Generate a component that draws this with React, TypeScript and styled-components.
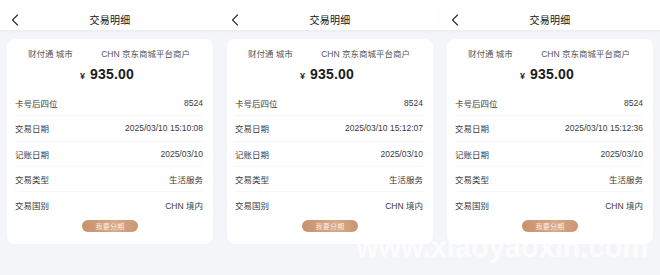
import styled, { createGlobalStyle } from "styled-components";

const GlobalStyle = createGlobalStyle`
  html, body {
    margin: 0;
    padding: 0;
    background: #f3f5f9;
    font-family: "Liberation Sans", "Noto Sans CJK SC", sans-serif;
  }
`;

interface Detail {
  time: string;
}

const details: Detail[] = [
  { time: "15:10:08" },
  { time: "15:12:07" },
  { time: "15:12:36" },
];

const Page = styled.div`
  position: relative;
  display: flex;
  width: 660px;
  height: 275px;
  overflow: hidden;
  background: #f3f5f9;
`;

const Panel = styled.div`
  width: 220px;
  display: flex;
  flex-direction: column;
`;

const Header = styled.div`
  height: 31px;
  box-sizing: border-box;
  padding-top: 9px;
  display: flex;
  align-items: center;
  justify-content: center;
  position: relative;
  background: #fff;
  border-bottom: 1px solid #eceef3;
  box-shadow: 0 1px 2px rgba(0, 0, 0, 0.03);
`;

const Back = styled.svg`
  position: absolute;
  left: 11px;
  top: 14px;
`;

const Title = styled.span`
  font-size: 10px;
  font-weight: 400;
  color: #111;
  letter-spacing: 0.3px;
`;

const Card = styled.div`
  margin: 8px 7px 0;
  background: #fff;
  border-radius: 8px;
  padding: 10px 10px 12px 8px;
  display: flex;
  flex-direction: column;
  height: 205px;
  box-sizing: border-box;
`;

const Merchant = styled.div`
  display: flex;
  justify-content: space-between;
  padding: 0 13px 0 13px;
  font-size: 8.5px;
  line-height: 10px;
  color: #555;
`;

const Amount = styled.div`
  margin-top: 5px;
  display: flex;
  align-items: baseline;
  justify-content: center;
  gap: 5px;
  line-height: 21px;
  color: #1c1c1c;
  font-weight: 700;
  padding-right: 4px;
`;

const Yen = styled.span`
  font-size: 9px;
`;

const Figure = styled.span`
  font-size: 14px;
  letter-spacing: 0.2px;
`;

const Rows = styled.div`
  margin-top: 4px;
  display: flex;
  flex-direction: column;
`;

const Row = styled.div<{ $last?: boolean }>`
  height: 25.3px;
  display: flex;
  align-items: center;
  justify-content: space-between;
  font-size: 8.5px;
  color: #3a3a3a;
  border-bottom: ${({ $last }) => ($last ? "none" : "1px solid #f7f7f9")};
  box-sizing: border-box;
`;

const Button = styled.div`
  align-self: center;
  margin-top: 3px;
  margin-left: 2px;
  width: 56px;
  height: 14px;
  border-radius: 7px;
  background: linear-gradient(90deg, #c8916c, #d8aa88 60%, #c99574);
  color: #fbeee4;
  font-size: 7px;
  display: flex;
  align-items: center;
  justify-content: center;
  letter-spacing: 0.3px;
`;

const Watermark = styled.div`
  position: absolute;
  left: 356px;
  top: 234px;
  font-size: 29px;
  line-height: 26px;
  font-weight: 700;
  color: rgba(255, 255, 255, 0.8);
  white-space: nowrap;
  pointer-events: none;
`;

const rows = (time: string): [string, string][] => [
  ["卡号后四位", "8524"],
  ["交易日期", `2025/03/10 ${time}`],
  ["记账日期", "2025/03/10"],
  ["交易类型", "生活服务"],
  ["交易国别", "CHN 境内"],
];

const DetailPanel = ({ time }: Detail) => {
  const items = rows(time);
  return (
    <Panel>
      <Header>
        <Back width="8" height="12" viewBox="0 0 8 12">
          <polyline
            points="6.5,1 1.5,6 6.5,11"
            fill="none"
            stroke="#333"
            strokeWidth="1.2"
            strokeLinecap="round"
            strokeLinejoin="round"
          />
        </Back>
        <Title>交易明细</Title>
      </Header>
      <Card>
        <Merchant>
          <span>财付通 城市</span>
          <span>CHN 京东商城平台商户</span>
        </Merchant>
        <Amount>
          <Yen>¥</Yen>
          <Figure>935.00</Figure>
        </Amount>
        <Rows>
          {items.map(([label, value], i) => (
            <Row key={label} $last={i === items.length - 1}>
              <span>{label}</span>
              <span>{value}</span>
            </Row>
          ))}
        </Rows>
        <Button>我要分期</Button>
      </Card>
    </Panel>
  );
};

export default function App() {
  return (
    <>
      <GlobalStyle />
      <Page>
        {details.map((d) => (
          <DetailPanel key={d.time} time={d.time} />
        ))}
        <Watermark>www.xiaoyaoxin.com</Watermark>
      </Page>
    </>
  );
}
